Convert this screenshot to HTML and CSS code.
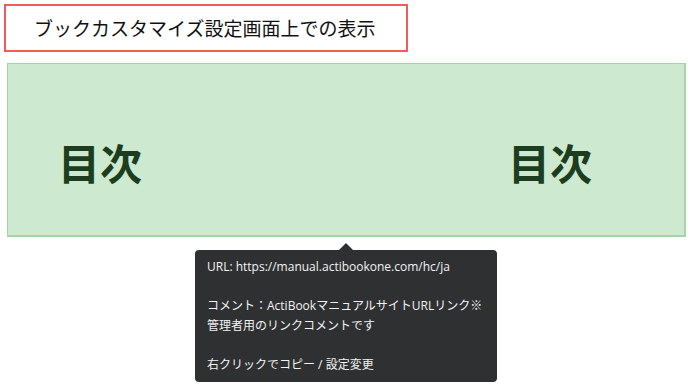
FILE: index.html
```html
<!DOCTYPE html>
<html lang="ja">
<head>
    <meta charset="UTF-8">
    <meta name="viewport" content="width=device-width, initial-scale=1.0">
    <title>ブックカスタマイズ設定画面上での表示</title>
    <link rel="stylesheet" href="styles.css">
</head>
<body>

    <div class="caption">ブックカスタマイズ設定画面上での表示</div>

    <div class="preview">
        <div class="toc-bar">
            <span class="toc-label">目次</span>
            <span class="toc-label">目次</span>
        </div>

        <!-- リンクにホバーした時の吹き出し -->
        <div class="link-popup">
            <p>URL: https://manual.actibookone.com/hc/ja</p>
            <p>&nbsp;</p>
            <p>コメント：ActiBookマニュアルサイトURLリンク※</p>
            <p>管理者用のリンクコメントです</p>
            <p>&nbsp;</p>
            <p>右クリックでコピー / 設定変更</p>
        </div>
    </div>

</body>
</html>
```

FILE: styles.css
```css
body {
    font-family: "Noto Sans CJK JP", "Noto Sans", sans-serif;
    background-color: #ffffff;
    margin: 0;
    padding: 0;
}

.caption {
    width: 372px;
    height: 44px;
    margin: 4px 0 0 4px;
    padding-left: 28px;
    border: 2px solid #f05b5b;
    font-size: 19px;
    line-height: 44px;
    color: #111;
}

.preview {
    margin: 11px 0 0 7px;
    width: 679px;
}

.toc-bar {
    display: flex;
    gap: 366px;
    box-sizing: border-box;
    height: 174px;
    padding: 73px 0 0 50px;
    background-color: #cde9cf;
    border: 1px solid #a5d4a6;
    border-width: 1px 2px 2px 1px;
}

.toc-label {
    font-size: 42px;
    font-weight: bold;
    line-height: 50px;
    color: #1c3d1e;
}

.link-popup {
    position: relative;
    width: 278px;
    margin: 13px 0 0 188px;
    padding: 7px 12px 8px 12px;
    background-color: #2f3032;
    border-radius: 4px;
    color: #f2f2f2;
    font-family: "Open Sans", "Noto Sans CJK JP", sans-serif;
    font-size: 12px;
}

.link-popup::before {
    content: "";
    position: absolute;
    left: 144px;
    top: -7px;
    border-left: 7px solid transparent;
    border-right: 7px solid transparent;
    border-bottom: 7px solid #2f3032;
}

.link-popup p {
    margin: 0;
    line-height: 19.5px;
    white-space: nowrap;
}
```
